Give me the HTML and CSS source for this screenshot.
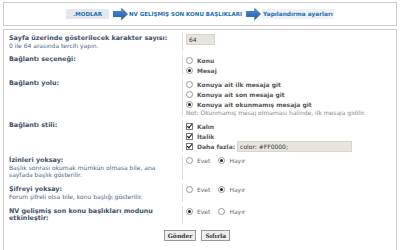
FILE: index.html
```html
<!DOCTYPE html>
<html lang="tr">
<head>
  <meta charset="UTF-8" />
  <title>Yapılandırma ayarları</title>
  <link rel="stylesheet" href="styles.css">
</head>
<body>
  <div class="crumbs">
    <span class="crumb">.MODLAR</span>
    <span class="arrow"></span>
    <span class="crumb plain">NV GELİŞMİŞ SON KONU BAŞLIKLARI</span>
    <span class="arrow"></span>
    <span class="crumb current">Yapılandırma ayarları</span>
  </div>

  <div class="panel">
    <dl class="row">
      <dt>
        <label>Sayfa üzerinde gösterilecek karakter sayısı:</label>
        <span class="explain">0 ile 64 arasında tercih yapın.</span>
      </dt>
      <dd><span class="field short">64</span></dd>
    </dl>

    <dl class="row">
      <dt class="mid"><label>Bağlantı seçeneği:</label></dt>
      <dd>
        <div class="opt"><span class="radio"></span><b>Konu</b></div>
        <div class="opt"><span class="radio on"></span><b>Mesaj</b></div>
      </dd>
    </dl>

    <dl class="row">
      <dt class="mid"><label>Bağlantı yolu:</label></dt>
      <dd>
        <div class="opt"><span class="radio"></span><b>Konuya ait ilk mesaja git</b></div>
        <div class="opt"><span class="radio"></span><b>Konuya ait son mesaja git</b></div>
        <div class="opt"><span class="radio on"></span><b>Konuya ait okunmamış mesaja git</b></div>
        <div class="note">Not: Okunmamış mesaj olmaması halinde, ilk mesaja gidilir.</div>
      </dd>
    </dl>

    <dl class="row">
      <dt class="mid"><label>Bağlantı stili:</label></dt>
      <dd>
        <div class="opt"><span class="check"></span><b>Kalın</b></div>
        <div class="opt"><span class="check"></span><b>İtalik</b></div>
        <div class="opt"><span class="check"></span><b>Daha fazla:</b><span class="field long">color: #FF0000;</span></div>
      </dd>
    </dl>

    <dl class="row">
      <dt>
        <label>İzinleri yoksay:</label>
        <span class="explain">Başlık sonrası okumak mümkün olmasa bile, ana sayfada başlık gösterilir.</span>
      </dt>
      <dd>
        <div class="opt"><span class="radio"></span>Evet <span class="radio on gap"></span>Hayır</div>
      </dd>
    </dl>

    <dl class="row">
      <dt>
        <label>Şifreyi yoksay:</label>
        <span class="explain">Forum şifreli olsa bile, konu başlığı gösterilir.</span>
      </dt>
      <dd>
        <div class="opt"><span class="radio"></span>Evet <span class="radio on gap"></span>Hayır</div>
      </dd>
    </dl>

    <dl class="row">
      <dt><label>NV gelişmiş son konu başlıkları modunu etkinleştir:</label></dt>
      <dd>
        <div class="opt"><span class="radio on"></span>Evet <span class="radio gap"></span>Hayır</div>
      </dd>
    </dl>

    <div class="buttons">
      <button type="button">Gönder</button>
      <button type="button">Sıfırla</button>
    </div>
  </div>
</body>
</html>
```

FILE: styles.css
```css
body {
  font-family: "DejaVu Sans", Verdana, sans-serif;
  font-size: 6px;
  margin: 2px 3px;
  background: #fff;
  color: #536482;
}

.crumbs {
  display: flex;
  align-items: center;
  justify-content: center;
  height: 22px;
  border: 1px solid #ccc;
  margin-bottom: 3px;
}

.crumb {
  font-weight: bold;
  font-size: 5.5px;
  color: #1b6fb0;
  background: #e3e8ee;
  padding: 2px 7px;
  line-height: 6px;
}

.crumb.plain {
  background: none;
  padding: 2px 0;
}

.crumb.current {
  font-size: 5.8px;
  background: #eef2f6;
  padding: 2px 1px;
}

.arrow {
  width: 15px;
  height: 13px;
  margin: 0 1px 0 4px;
  background: linear-gradient(#4d8ad0, #1f5ea8);
  clip-path: polygon(0 26%, 55% 26%, 55% 0, 100% 50%, 55% 100%, 55% 74%, 0 74%);
}

.panel {
  border: 1px solid #ccc;
  height: 217px;
  padding: 3px 4px 0;
}

.row {
  display: flex;
  margin: 0 0 4px;
}

.row dt {
  width: 167px;
  padding: 2px 6px 2px 1px;
}

.row dt.mid {
  padding-top: 1px;
}

.row dt label {
  display: block;
  font-weight: bold;
  font-size: 6.4px;
  line-height: 7px;
  color: #425067;
}

.explain {
  display: block;
  color: #4c6685;
  line-height: 7px;
}

.row dd {
  flex: 1;
  margin: 0;
  border-left: 1px solid #ddd;
  padding: 0 0 0 3px;
}

.opt {
  display: flex;
  align-items: center;
  height: 10px;
  color: #666;
}

.opt b {
  color: #555;
}

.note {
  color: #888;
  height: 8px;
  line-height: 8px;
}

.field {
  display: inline-block;
  background: #e8e5df;
  border: 1px solid #d8d4cc;
  color: #333;
  padding: 1px 2px;
  line-height: 7px;
}

.field.short {
  width: 23px;
  margin-top: 1px;
}

.field.long {
  width: 109px;
  margin-left: 2px;
}

.radio {
  display: inline-block;
  width: 5px;
  height: 5px;
  border: 1px solid #999;
  border-radius: 50%;
  margin-right: 4px;
  position: relative;
}

.radio.on::after {
  content: "";
  position: absolute;
  left: 1px;
  top: 1px;
  width: 3px;
  height: 3px;
  border-radius: 50%;
  background: #222;
}

.radio.gap {
  margin-left: 8px;
}

.check {
  display: inline-block;
  width: 5px;
  height: 5px;
  border: 1px solid #777;
  margin-right: 4px;
  position: relative;
}

.check::after {
  content: "";
  position: absolute;
  left: 1px;
  top: -1px;
  width: 2px;
  height: 4px;
  border: solid #111;
  border-width: 0 1px 1px 0;
  transform: rotate(40deg);
}

.buttons {
  display: flex;
  justify-content: center;
  gap: 5px;
  margin-top: 6px;
  padding-right: 6px;
}

button {
  font-family: "DejaVu Serif", serif;
  font-weight: bold;
  font-size: 6px;
  color: #333;
  background: #eee;
  border: 1px solid #999;
  padding: 0 3px;
  height: 11px;
}
```
